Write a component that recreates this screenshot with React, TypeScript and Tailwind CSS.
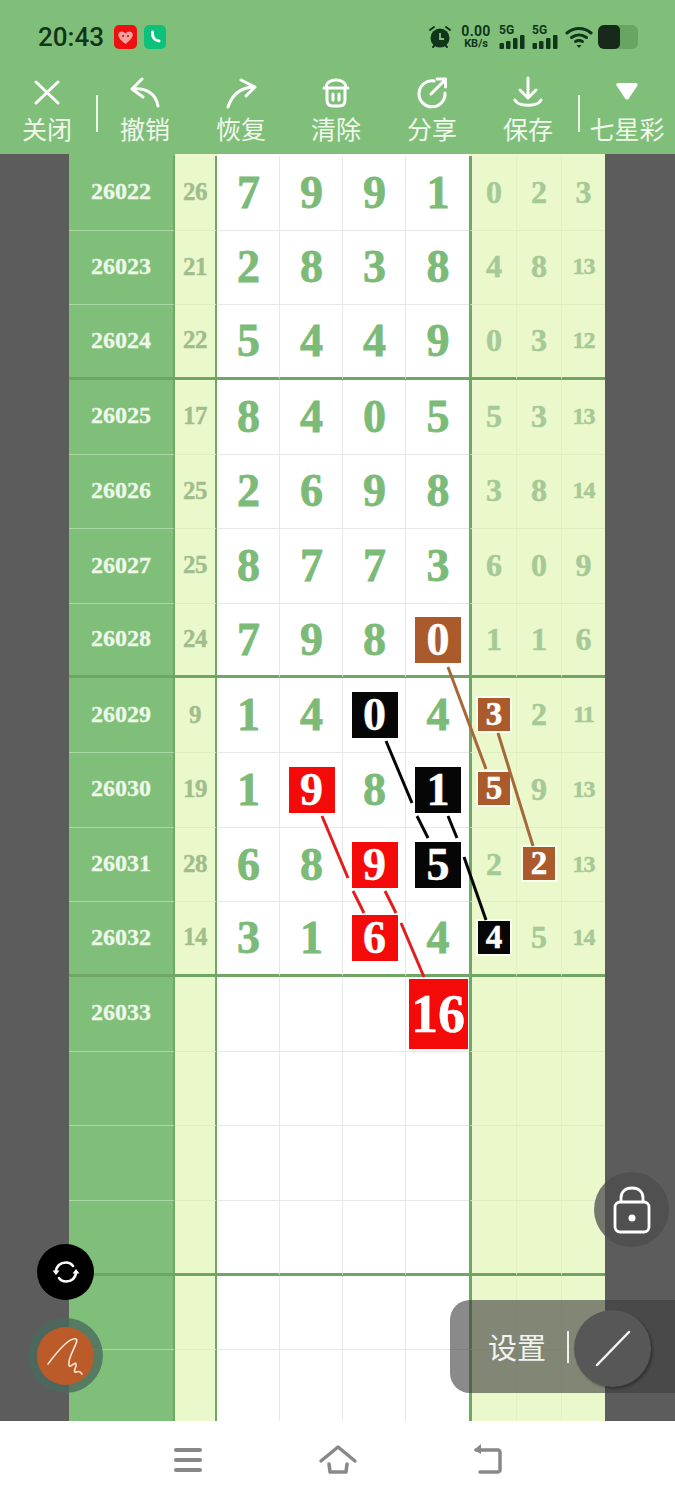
import React from "react";

type D = number | [number, "red" | "black" | "brown"] | null;

const bgOf = { red: "bg-[#f50a0a]", black: "bg-[#060606]", brown: "bg-[#ab5a2c]" };

const rows: { id: string; sum: string; d: D[]; r: (D | string)[]; thick?: boolean }[] = [
  { id: "26022", sum: "26", d: [7, 9, 9, 1], r: [0, 2, "3"] },
  { id: "26023", sum: "21", d: [2, 8, 3, 8], r: [4, 8, "13"] },
  { id: "26024", sum: "22", d: [5, 4, 4, 9], r: [0, 3, "12"], thick: true },
  { id: "26025", sum: "17", d: [8, 4, 0, 5], r: [5, 3, "13"] },
  { id: "26026", sum: "25", d: [2, 6, 9, 8], r: [3, 8, "14"] },
  { id: "26027", sum: "25", d: [8, 7, 7, 3], r: [6, 0, "9"] },
  { id: "26028", sum: "24", d: [7, 9, 8, [0, "brown"]], r: [1, 1, "6"], thick: true },
  { id: "26029", sum: "9", d: [1, 4, [0, "black"], 4], r: [[3, "brown"], 2, "11"] },
  { id: "26030", sum: "19", d: [1, [9, "red"], 8, [1, "black"]], r: [[5, "brown"], 9, "13"] },
  { id: "26031", sum: "28", d: [6, 8, [9, "red"], [5, "black"]], r: [2, [2, "brown"], "13"] },
  { id: "26032", sum: "14", d: [3, 1, [6, "red"], 4], r: [[4, "black"], 5, "14"], thick: true },
  { id: "26033", sum: "", d: [null, null, null, null], r: [null, null, null] },
  { id: "", sum: "", d: [null, null, null, null], r: [null, null, null] },
  { id: "", sum: "", d: [null, null, null, null], r: [null, null, null] },
  { id: "", sum: "", d: [null, null, null, null], r: [null, null, null], thick: true },
  { id: "", sum: "", d: [null, null, null, null], r: [null, null, null] },
  { id: "", sum: "", d: [null, null, null, null], r: [null, null, null] },
];

function Square({ n, k, small }: { n: number; k: "red" | "black" | "brown"; small?: boolean }) {
  return (
    <span
      className={`${bgOf[k]} ${small ? "w-[32px] h-[33px] text-[33px]" : "w-[46px] h-[46px] text-[46px]"} flex items-center justify-center text-white font-bold leading-none ring-2 ring-white/70 [-webkit-text-stroke:0.5px_#fff]`}
    >
      {n}
    </span>
  );
}

function Row({ row, index }: { row: (typeof rows)[number]; index: number }) {
  const thick = row.thick;
  return (
    <div className="flex h-[74.65px]">
      <div
        className={`w-[106px] shrink-0 bg-[#80bf79] border-r-2 border-r-[#6fa865] flex items-center justify-center pb-[3px] text-[24px] font-bold text-[#eef8e8] [-webkit-text-stroke:0.3px_#eef8e8] ${
          thick ? "border-b-[3px] border-b-[#6fa565]" : "border-b border-b-[#a8d8a0]"
        }`}
      >
        {row.id}
      </div>
      <div
        className={`w-[42px] shrink-0 bg-[#ebf8cb] border-r-2 border-r-[#6fa865] flex items-center justify-center pb-[2px] text-[25px] tracking-[-0.5px] font-bold text-[#a0bd8d] [-webkit-text-stroke:0.4px_#a0bd8d] ${
          thick ? "border-b-[3px] border-b-[#6fa565]" : "border-b border-b-[#dfedc2]"
        }`}
      >
        {row.sum}
      </div>
      {row.d.map((v, i) => (
        <div
          key={i}
          className={`w-[63px] shrink-0 bg-white pl-[1px] flex items-center justify-center text-[46px] font-bold leading-none text-[#7cba78] [-webkit-text-stroke:0.8px_#7cba78] ${
            i < 3 ? "border-r border-r-[#e8e8e8]" : ""
          } ${thick ? "border-b-[3px] border-b-[#6fa565]" : "border-b border-b-[#e8e8e8]"}`}
        >
          {Array.isArray(v) ? <Square n={v[0]} k={v[1]} /> : v}
          {index === 11 && i === 3 ? (
            <span className="w-[59px] h-[70px] bg-[#f50a0a] flex items-center justify-center text-white text-[54px] [-webkit-text-stroke:0.5px_#fff]">16</span>
          ) : null}
        </div>
      ))}
      {row.r.map((v, i) => (
        <div
          key={i}
          className={`shrink-0 bg-[#ebf8cb] flex items-center justify-center pb-[2px] font-bold leading-none text-[#a6c998] [-webkit-text-stroke:0.5px_#a6c998] ${
            i === 0 ? "w-[47px] border-l-[3px] border-l-[#6fa865] text-[32px]" : i === 1 ? "w-[45px] border-l border-l-[#e2f0c4] text-[32px]" : "w-[44px] border-l border-l-[#e2f0c4]"
          } ${typeof v === "string" && v.length > 1 ? "text-[24px] tracking-[-1px]" : i === 2 ? "text-[32px]" : ""} ${
            thick ? "border-b-[3px] border-b-[#6fa565]" : "border-b border-b-[#dfedc2]"
          }`}
        >
          {Array.isArray(v) ? <Square n={v[0]} k={v[1]} small /> : v}
        </div>
      ))}
    </div>
  );
}

const Stroke = ({ children }: { children: React.ReactNode }) => (
  <svg viewBox="0 0 36 36" className="w-[36px] h-[36px]" fill="none" stroke="#fff" strokeWidth="3" strokeLinecap="round" strokeLinejoin="round">
    {children}
  </svg>
);

function Tool({ w, label, children }: { w: string; label: string; children: React.ReactNode }) {
  return (
    <div className={`${w} shrink-0 flex flex-col items-center`}>
      {children}
      <span className="text-[25px] leading-[36px] text-[#f1f8ec] whitespace-nowrap">{label}</span>
    </div>
  );
}

function Signal() {
  return (
    <div className="flex flex-col items-start w-[27px]">
      <span className="text-[12px] leading-[11px] font-bold">5G</span>
      <svg viewBox="0 0 27 14" className="w-[27px] h-[14px] -mt-[1px]" fill="#10351a">
        <rect x="0.500" y="8" width="4.500" height="6" rx="1" />
        <rect x="7" y="6" width="4.500" height="8" rx="1" />
        <rect x="14" y="3" width="4.500" height="11" rx="1" />
        <rect x="21" y="0" width="4.500" height="14" rx="1" />
      </svg>
    </div>
  );
}

export default function App() {
  return (
    <div className="relative w-[675px] h-[1500px] overflow-hidden bg-white flex flex-col font-['Noto_Sans_CJK_SC','Noto_Sans',sans-serif]">
      <header className="h-[154px] shrink-0 bg-[#80bf79] flex flex-col">
        <div className="h-[74px] shrink-0 flex items-center pl-[38px] pr-[37px] text-[#10351a] font-['Roboto',sans-serif]">
          <span className="text-[26px] leading-none font-medium mr-[10px]">20:43</span>
          <svg viewBox="0 0 23 24" className="w-[23px] h-[24px] mr-[7px]">
            <rect width="23" height="24" rx="5" fill="#ee1010" />
            <path d="M11.5 19 C5 14 3.5 11 4.5 8.5 C5.7 5.8 9.5 5.8 11.5 8.5 C13.5 5.8 17.3 5.8 18.5 8.5 C19.5 11 18 14 11.5 19Z" fill="#f7a0a0" />
            <circle cx="9" cy="11" r="1" fill="#c01010" />
            <circle cx="14" cy="11" r="1" fill="#c01010" />
          </svg>
          <svg viewBox="0 0 22 24" className="w-[22px] h-[24px]">
            <rect width="22" height="24" rx="5" fill="#0cc27a" />
            <path d="M8.5 7 C8 12 10.5 15.5 15 16" fill="none" stroke="#fff" strokeWidth="3" strokeLinecap="round" />
          </svg>
          <div className="ml-auto flex items-center">
            <svg viewBox="0 0 24 24" className="w-[24px] h-[24px] mr-[9px]">
              <circle cx="12" cy="13" r="9.500" fill="#10351a" />
              <path d="M12 8v6h4" stroke="#80bf79" strokeWidth="1.800" fill="none" />
              <path d="M2 5l4-3M22 5l-4-3M5 22l2-2M19 22l-2-2" stroke="#10351a" strokeWidth="2" strokeLinecap="round" />
            </svg>
            <div className="flex flex-col items-center mr-[8px] w-[30px]">
              <span className="text-[14px] leading-[13px] font-bold tracking-[0.3px]">0.00</span>
              <span className="text-[11px] leading-[12px] font-bold">KB/s</span>
            </div>
            <div className="flex gap-[6px] mr-[6px]">
              <Signal />
              <Signal />
            </div>
            <svg viewBox="0 0 28 24" className="w-[28px] h-[24px] mr-[5px]" fill="none" stroke="#10351a" strokeWidth="3" strokeLinecap="round">
              <path d="M2 8 C9 2 19 2 26 8" />
              <path d="M6.500 12.500 C11 9 17 9 21.500 12.500" />
              <path d="M10.500 16.500 C13 15 15 15 17.500 16.500" />
              <path d="M14 23l-2.500-3h5z" fill="#10351a" stroke="none" />
            </svg>
            <div className="w-[40px] h-[24px] rounded-[6px] bg-[#68a562] overflow-hidden">
              <div className="w-[22px] h-full bg-[#16291a] rounded-[5px]" />
            </div>
          </div>
        </div>
        <div className="flex items-start">
          <Tool w="w-[94px]" label="关闭">
            <Stroke>
              <path d="M7 8l22 21M29 8L7 29" />
            </Stroke>
          </Tool>
          <div className="w-[2px] h-[37px] bg-[#eef7ea] ml-[2px] mt-[21px] shrink-0" />
          <Tool w="w-[94px]" label="撤销">
            <Stroke>
              <path d="M15 5L5 15l11 8M5 15C19 13 29 20 31 32" />
            </Stroke>
          </Tool>
          <Tool w="w-[98px]" label="恢复">
            <Stroke>
              <path d="M18 6l14 7-9 9M32 13C17 13 9 21 5 33" />
            </Stroke>
          </Tool>
          <Tool w="w-[92px]" label="清除">
            <Stroke>
              <path d="M6 14h24M9 14v12c0 4 2 6 6 6h6c4 0 6-2 6-6V14M8 14c0-5 4-8 10-8s10 3 10 8M15 20v6M21 20v6" />
            </Stroke>
          </Tool>
          <Tool w="w-[100px]" label="分享">
            <Stroke>
              <path d="M20 7A13 13 0 1 0 31 19M17 20L31 6M23 5h8.500v8" />
            </Stroke>
          </Tool>
          <Tool w="w-[92px]" label="保存">
            <Stroke>
              <path d="M18 4v20M10 16l8 8 8-8M5 26c3 7 23 7 26 0" />
            </Stroke>
          </Tool>
          <div className="w-[2px] h-[37px] bg-[#eef7ea] ml-[4px] mt-[21px] shrink-0" />
          <Tool w="w-[94px]" label="七星彩">
            <svg viewBox="0 0 36 36" className="w-[36px] h-[36px]">
              <path d="M9 9h18c1.500 0 2 1.500 1.500 2.500L19.500 25c-.5.700-2.500.700-3 0L7.500 11.500C7 10.500 7.500 9 9 9z" fill="#fff" />
            </svg>
          </Tool>
        </div>
      </header>

      <main className="relative h-[1267px] shrink-0 bg-[#5c5c5c] overflow-hidden pl-[69px] font-['Liberation_Serif',serif]">
        <div className="flex h-[2px]">
          <div className="w-[106px] bg-[#80bf79]" />
          <div className="w-[42px] bg-[#ebf8cb]" />
          <div className="w-[252px] bg-white" />
          <div className="w-[136px] bg-[#ebf8cb]" />
        </div>
        {rows.map((r, i) => (
          <Row key={i} row={r} index={i} />
        ))}
        <svg className="absolute left-0 top-0 w-[675px] h-[1267px] pointer-events-none" viewBox="0 154 675 1267" fill="none" strokeWidth="3">
          <g stroke="#a5683a">
            <path d="M448 667L486 769" />
            <path d="M498 733L533 846" />
          </g>
          <g stroke="#060606">
            <path d="M386 741L412 803" />
            <path d="M417 816L428 838" />
            <path d="M448 816L457 838" />
            <path d="M464 857L486 920" />
          </g>
          <g stroke="#e41c1c">
            <path d="M322 816L348 878" />
            <path d="M353 891L364 913" />
            <path d="M385 891L396 913" />
            <path d="M401 923L424 977" />
          </g>
        </svg>
      </main>

      <footer className="flex-1 bg-white flex items-center justify-center gap-[106px] pb-[2px]">
        <svg viewBox="0 0 44 44" className="w-[44px] h-[44px]" fill="none" stroke="#888" strokeWidth="4" strokeLinecap="round">
          <path d="M10 12h24M10 22h24M10 32h24" />
        </svg>
        <svg viewBox="0 0 44 44" className="w-[44px] h-[44px]" fill="none" stroke="#888" strokeWidth="3.500" strokeLinecap="round" strokeLinejoin="round">
          <path d="M5 23L22 9l17 14" />
          <path d="M13 26l1 8h16l1-8" />
        </svg>
        <svg viewBox="0 0 44 44" className="w-[44px] h-[44px]" fill="none" stroke="#888" strokeWidth="3.500" strokeLinecap="round" strokeLinejoin="round">
          <path d="M10 12h22c1 0 2 1 2 2v18c0 1-1 2-2 2H14" />
          <path d="M15 6l-7 6 7 4z" fill="#888" stroke="none" />
        </svg>
      </footer>

      {/* floating controls */}
      <div className="absolute left-[37px] top-[1244px] w-[57px] h-[56px] rounded-full bg-black flex items-center justify-center">
        <svg viewBox="0 0 30 30" className="w-[30px] h-[30px]" fill="none" stroke="#fff" strokeWidth="2.600" strokeLinecap="round">
          <path d="M5 15C5 9 9.500 5.500 15 5.500c3 0 5.500 1.300 7 3.500" />
          <path d="M25 15c0 6-4.500 9.500-10 9.500-3 0-5.500-1.300-7-3.500" />
          <path d="M1.500 13.500h7L5 18zM28.500 16.500h-7L25 12z" fill="#fff" stroke="none" />
        </svg>
      </div>
      <div className="absolute left-[28px] top-[1318px] w-[75px] h-[75px] rounded-full bg-[#4a6a5c]/80 flex items-center justify-center">
        <div className="w-[57px] h-[58px] rounded-full bg-[#bb5b2a]">
          <svg viewBox="0 0 57 58" className="w-[57px] h-[58px]" fill="none" stroke="#fbe6d4" strokeWidth="1.600" strokeLinecap="round" strokeLinejoin="round">
            <path d="M11 37C20 25 33 10 39 12C43 14 30 30 32 38C33 42 38 34 39 37C40 40 36 43 38 45C40 46 42 42 45 47" />
          </svg>
        </div>
      </div>
      <div className="absolute left-[594px] top-[1172px] w-[75px] h-[75px] rounded-full bg-[#4c4c4c]/75 flex items-center justify-center">
        <svg viewBox="0 0 40 50" className="w-[40px] h-[50px]" fill="none" stroke="#fff" strokeWidth="2.800">
          <rect x="3" y="17" width="34" height="30" rx="5" />
          <path d="M9 17V13C9 7 13 3 20 3s11 4 11 10v4" />
          <circle cx="20" cy="33" r="3.500" fill="#fff" stroke="none" />
        </svg>
      </div>
      <div className="absolute left-[450px] top-[1300px] w-[225px] h-[93px] rounded-l-[20px] bg-[#3c3c3c]/60 flex items-center pl-[38px]">
        <span className="text-[29px] leading-none text-[#f2f2f2]">设置</span>
        <div className="w-[2px] h-[32px] bg-[#f0f0f0] ml-[21px]" />
      </div>
      <div className="absolute left-[574px] top-[1310px] w-[77px] h-[77px] rounded-full bg-[#575757] shadow-[2px_2px_3px_rgba(0,0,0,0.3)] flex items-center justify-center">
        <svg viewBox="0 0 40 40" className="w-[40px] h-[40px]" stroke="#f4f4f4" strokeWidth="2.500" strokeLinecap="round">
          <path d="M4 36L36 3" />
        </svg>
      </div>
    </div>
  );
}
